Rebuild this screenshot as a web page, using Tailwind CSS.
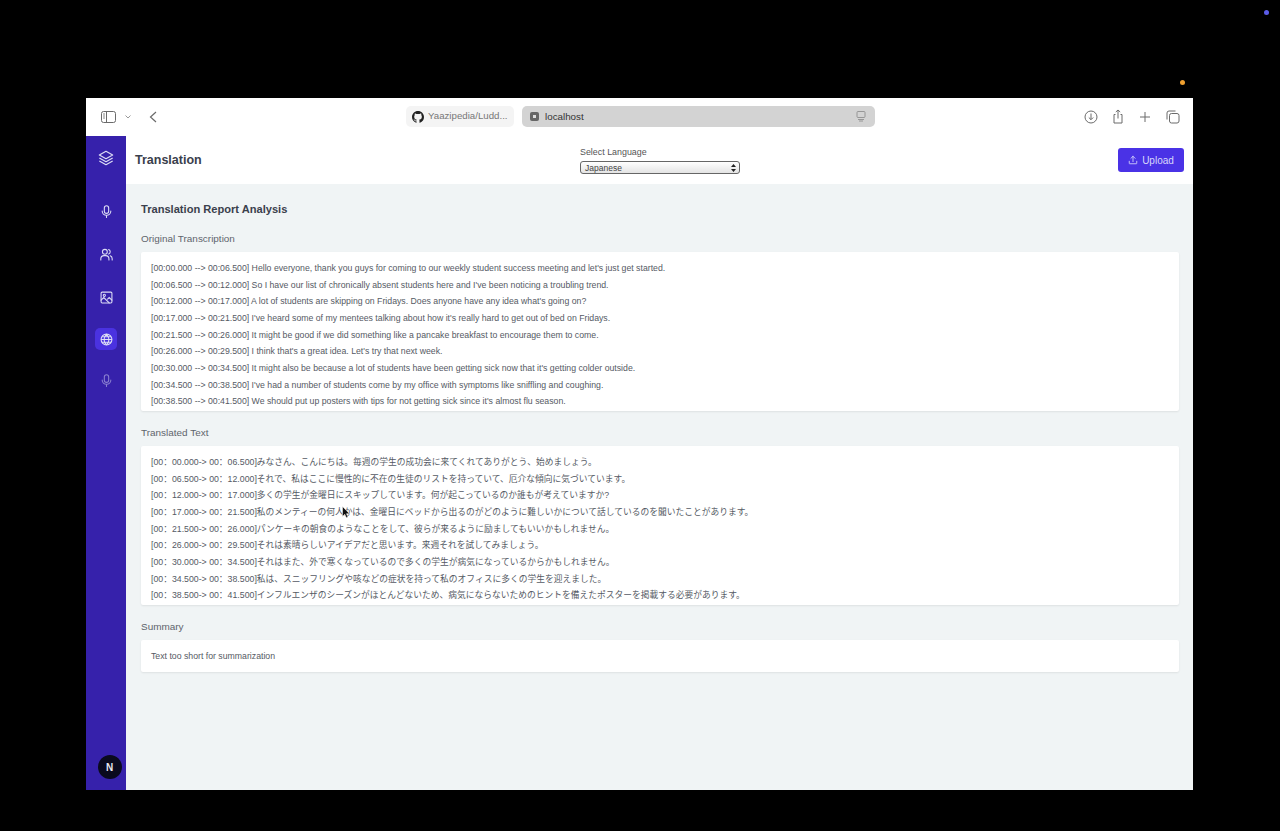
<!DOCTYPE html>
<html lang="en">

<head>
    <meta charset="UTF-8">
    <meta name="viewport" content="width=device-width, initial-scale=1.0">
    <title>Translation</title>
    <script src="https://cdn.jsdelivr.net/npm/@tailwindcss/browser@4"></script>
</head>

<body class="bg-black overflow-hidden font-['Liberation_Sans','Noto_Sans_CJK_JP',sans-serif]">

    <!-- recording dots -->
    <div class="absolute left-[1264px] top-[10px] w-[5px] h-[5px] rounded-full bg-[#5b5ce8]"></div>
    <div class="absolute left-[1180px] top-[80px] w-[5px] h-[5px] rounded-full bg-[#f0a030]"></div>

    <div class="h-[831px] pt-[98px] pl-[86px]">
        <div class="w-[1107px] h-[692px] flex flex-col bg-white overflow-hidden">

            <!-- safari toolbar -->
            <div class="h-[38px] shrink-0 flex items-center pb-[1px] text-[#6b6b6b]">
                <svg class="ml-[15px] w-[15px] h-[12px]" viewBox="0 0 15 12" fill="none" stroke="currentColor" stroke-width="1"><rect x=".5" y=".5" width="14" height="11" rx="2"/><path d="M5.5 .5v11"/><path d="M2 3h2M2 5h2M2 7h2" stroke-width=".8"/></svg>
                <svg class="ml-[9px] w-[6px] h-[4px]" viewBox="0 0 6 4" fill="none" stroke="#999" stroke-width="1"><path d="M.5 .5 3 3l2.5-2.5"/></svg>
                <svg class="ml-[18px] w-[8px] h-[12px]" viewBox="0 0 8 12" fill="none" stroke="currentColor" stroke-width="1.2"><path d="M7 1 1.5 6 7 11"/></svg>

                <div class="ml-[249px] w-[108px] h-[21px] rounded-[5px] bg-[#f4f4f4] flex items-center pl-[6px] gap-[4px]">
                    <svg class="w-[12px] h-[12px]" viewBox="0 0 16 16" fill="#222"><path d="M8 0C3.58 0 0 3.58 0 8c0 3.54 2.29 6.53 5.47 7.59.4.07.55-.17.55-.38 0-.19-.01-.82-.01-1.49-2.01.37-2.53-.49-2.69-.94-.09-.23-.48-.94-.82-1.13-.28-.15-.68-.52-.01-.53.63-.01 1.08.58 1.23.82.72 1.21 1.87.87 2.33.66.07-.52.28-.87.51-1.07-1.78-.2-3.64-.89-3.64-3.95 0-.87.31-1.59.82-2.15-.08-.2-.36-1.02.08-2.12 0 0 .67-.21 2.2.82.64-.18 1.32-.27 2-.27s1.36.09 2 .27c1.53-1.04 2.2-.82 2.2-.82.44 1.1.16 1.92.08 2.12.51.56.82 1.27.82 2.15 0 3.07-1.87 3.75-3.65 3.95.29.25.54.73.54 1.48 0 1.07-.01 1.93-.01 2.2 0 .21.15.46.55.38A8.01 8.01 0 0 0 16 8c0-4.42-3.58-8-8-8z"/></svg>
                    <span class="text-[9.700px] text-[#777]">Yaazipedia/Ludd...</span>
                </div>

                <div class="ml-[8px] w-[353px] h-[21px] rounded-[5px] bg-[#d3d3d3] flex items-center pl-[8px] pr-[9px]">
                    <span class="w-[9px] h-[9px] rounded-[2px] bg-[#666] flex items-center justify-center"><span class="w-[3px] h-[3px] bg-[#ddd]"></span></span>
                    <span class="ml-[6px] pt-[1px] text-[9.800px] text-[#333]">localhost</span>
                    <svg class="ml-auto w-[10px] h-[11px]" viewBox="0 0 10 11" fill="none" stroke="#888" stroke-width=".8"><rect x="1" y=".5" width="8" height="6" rx="1"/><path d="M2 8.500h6M3 10h4"/></svg>
                </div>

                <div class="ml-auto mr-[13px] flex items-center gap-[13px]">
                    <svg class="w-[14px] h-[14px]" viewBox="0 0 14 14" fill="none" stroke="currentColor" stroke-width="1"><circle cx="7" cy="7" r="6"/><path d="M7 3.500v6M4.800 7.500 7 9.700l2.200-2.200"/></svg>
                    <svg class="w-[14px] h-[15px]" viewBox="0 0 14 15" fill="none" stroke="currentColor" stroke-width="1"><path d="M4.500 5.500H3v8.500h8V5.500H9.500M7 9.500V1M4.800 3 7 1l2.200 2"/></svg>
                    <svg class="w-[14px] h-[14px]" viewBox="0 0 14 14" fill="none" stroke="currentColor" stroke-width="1"><path d="M7 2v10M2 7h10"/></svg>
                    <svg class="ml-[1px] w-[14px] h-[14px]" viewBox="0 0 14 14" fill="none" stroke="currentColor" stroke-width="1"><rect x="3.500" y="3.500" width="9.500" height="9.500" rx="2"/><path d="M1 9.500V3a2 2 0 0 1 2-2h6.500"/></svg>
                </div>
            </div>

            <div class="flex-1 flex min-h-0">

                <!-- sidebar -->
                <aside class="w-[40px] shrink-0 bg-[#3621ab] flex flex-col items-center text-[#dcdcf5]">
                    <svg class="mt-[14px] w-[16px] h-[16px]" viewBox="0 0 24 24" fill="none" stroke="currentColor" stroke-width="1.8" stroke-linejoin="round"><path d="M12 2 2 7.500 12 13l10-5.500z"/><path d="m2 12 10 5.500L22 12"/><path d="m2 16.500 10 5.500 10-5.500"/></svg>

                    <svg class="mt-[39px] w-[13px] h-[13px]" viewBox="0 0 24 24" fill="none" stroke="currentColor" stroke-width="2" stroke-linecap="round"><rect x="8" y="1.500" width="8" height="14" rx="4"/><path d="M4 11a8 8 0 0 0 16 0M12 19v4"/></svg>

                    <svg class="mt-[30px] w-[13px] h-[13px]" viewBox="0 0 24 24" fill="none" stroke="currentColor" stroke-width="2" stroke-linecap="round"><circle cx="9" cy="7" r="4.500"/><path d="M1.500 22v-2a6 6 0 0 1 6-6h3a6 6 0 0 1 6 6v2M16 2.800a4.500 4.500 0 0 1 0 8.400M19 14.300a6 6 0 0 1 3.500 5.700v2"/></svg>

                    <svg class="mt-[30px] w-[13px] h-[13px]" viewBox="0 0 24 24" fill="none" stroke="currentColor" stroke-width="2" stroke-linecap="round"><rect x="2" y="2" width="20" height="20" rx="2"/><circle cx="8" cy="8" r="2"/><path d="m2 17 5-5 10 10M14 15l3-3 5 5"/></svg>

                    <div class="mt-[24px] w-[22px] h-[22px] rounded-[5px] bg-[#4a32e0] flex items-center justify-center">
                        <svg class="w-[13px] h-[13px]" viewBox="0 0 24 24" fill="none" stroke="currentColor" stroke-width="2"><circle cx="12" cy="12" r="10"/><path d="M2 12h20M3.500 7h17M3.500 17h17M12 2c-6 6-6 14 0 20M12 2c6 6 6 14 0 20"/></svg>
                    </div>

                    <svg class="mt-[24px] w-[13px] h-[13px] opacity-50" viewBox="0 0 24 24" fill="none" stroke="currentColor" stroke-width="2" stroke-linecap="round"><rect x="8" y="1.500" width="8" height="14" rx="4"/><path d="M4 11a8 8 0 0 0 16 0M12 19v4"/></svg>

                    <div class="mt-auto mb-[11px] ml-[7px] w-[24px] h-[24px] rounded-full bg-[#0a0a1e] flex items-center justify-center text-[10px] font-bold text-[#e8e8f0]">N</div>
                </aside>

                <div class="flex-1 flex flex-col min-w-0">

                    <!-- header -->
                    <header class="h-[48px] shrink-0 bg-white flex items-center relative pl-[9px] pr-[9px]">
                        <h1 class="pt-[1px] text-[12.500px] font-bold text-[#3a404c]">Translation</h1>
                        <div class="absolute left-[454px] top-[11px]">
                            <p class="text-[8.900px] leading-[11px] text-[#555]">Select Language</p>
                            <div class="mt-[3px] w-[160px] h-[13px] rounded-[3px] border border-[#666] bg-gradient-to-b from-white to-[#e4e4e4] flex items-center pl-[4px] pr-[3px]">
                                <span class="pt-[1px] text-[8.500px] text-[#444]">Japanese</span>
                                <svg class="ml-auto w-[5px] h-[8px]" viewBox="0 0 5 8" fill="#222"><path d="M2.500 0 5 3H0zM2.500 8 0 5h5z"/></svg>
                            </div>
                        </div>
                        <button class="ml-auto w-[66px] h-[24px] rounded-[3px] bg-[#4a32e6] text-[#d8d8fb] text-[10px] flex items-center justify-center gap-[4px]">
                            <svg class="w-[10px] h-[10px]" viewBox="0 0 24 24" fill="none" stroke="currentColor" stroke-width="2" stroke-linecap="round"><path d="M12 16V3M7 8l5-5 5 5M3 15v5a1 1 0 0 0 1 1h16a1 1 0 0 0 1-1v-5"/></svg>
                            Upload
                        </button>
                    </header>

                    <!-- report -->
                    <main class="flex-1 bg-[#f0f4f5] pl-[15px] pr-[14px] pt-[19px]">
                        <h2 class="text-[11.100px] leading-[13px] font-bold text-[#3a404c]">Translation Report Analysis</h2>

                        <h3 class="mt-[17px] text-[9.950px] leading-[12px] text-[#5f646c]">Original Transcription</h3>
                        <div class="mt-[7px] h-[159px] bg-white rounded-[2px] shadow-[0_1px_2px_rgba(0,0,0,0.08)] pl-[10px] pt-[8px] text-[8.720px] leading-[16.650px] text-[#555a64] overflow-hidden">
                            <p>[00:00.000 --&gt; 00:06.500] Hello everyone, thank you guys for coming to our weekly student success meeting and let's just get started.</p>
                            <p>[00:06.500 --&gt; 00:12.000] So I have our list of chronically absent students here and I've been noticing a troubling trend.</p>
                            <p>[00:12.000 --&gt; 00:17.000] A lot of students are skipping on Fridays. Does anyone have any idea what's going on?</p>
                            <p>[00:17.000 --&gt; 00:21.500] I've heard some of my mentees talking about how it's really hard to get out of bed on Fridays.</p>
                            <p>[00:21.500 --&gt; 00:26.000] It might be good if we did something like a pancake breakfast to encourage them to come.</p>
                            <p>[00:26.000 --&gt; 00:29.500] I think that's a great idea. Let's try that next week.</p>
                            <p>[00:30.000 --&gt; 00:34.500] It might also be because a lot of students have been getting sick now that it's getting colder outside.</p>
                            <p>[00:34.500 --&gt; 00:38.500] I've had a number of students come by my office with symptoms like sniffling and coughing.</p>
                            <p>[00:38.500 --&gt; 00:41.500] We should put up posters with tips for not getting sick since it's almost flu season.</p>
                        </div>

                        <h3 class="mt-[16px] text-[9.950px] leading-[12px] text-[#5f646c]">Translated Text</h3>
                        <div class="mt-[7px] h-[159px] bg-white rounded-[2px] shadow-[0_1px_2px_rgba(0,0,0,0.08)] pl-[10px] pt-[8px] font-['Liberation_Sans','Noto_Sans_CJK_SC',sans-serif] text-[8.750px] leading-[16.650px] text-[#555a64] overflow-hidden">
                            <p>[00：00.000-&gt; 00：06.500]みなさん、こんにちは。毎週の学生の成功会に来てくれてありがとう、始めましょう。</p>
                            <p>[00：06.500-&gt; 00：12.000]それで、私はここに慢性的に不在の生徒のリストを持っていて、厄介な傾向に気づいています。</p>
                            <p>[00：12.000-&gt; 00：17.000]多くの学生が金曜日にスキップしています。何が起こっているのか誰もが考えていますか?</p>
                            <p>[00：17.000-&gt; 00：21.500]私のメンティーの何人かは、金曜日にベッドから出るのがどのように難しいかについて話しているのを聞いたことがあります。</p>
                            <p>[00：21.500-&gt; 00：26.000]パンケーキの朝食のようなことをして、彼らが来るように励ましてもいいかもしれません。</p>
                            <p>[00：26.000-&gt; 00：29.500]それは素晴らしいアイデアだと思います。来週それを試してみましょう。</p>
                            <p>[00：30.000-&gt; 00：34.500]それはまた、外で寒くなっているので多くの学生が病気になっているからかもしれません。</p>
                            <p>[00：34.500-&gt; 00：38.500]私は、スニッフリングや咳などの症状を持って私のオフィスに多くの学生を迎えました。</p>
                            <p>[00：38.500-&gt; 00：41.500]インフルエンザのシーズンがほとんどないため、病気にならないためのヒントを備えたポスターを掲載する必要があります。</p>
                        </div>

                        <h3 class="mt-[16px] text-[9.950px] leading-[12px] text-[#5f646c]">Summary</h3>
                        <div class="mt-[7px] h-[32px] bg-white rounded-[2px] shadow-[0_1px_2px_rgba(0,0,0,0.08)] pl-[10px] pt-[8px] text-[8.720px] leading-[16.650px] text-[#555a64]">
                            <p>Text too short for summarization</p>
                        </div>
                    </main>
                </div>
            </div>
        </div>
    </div>

    <!-- mouse pointer -->
    <svg class="absolute left-[342px] top-[506px] w-[8px] h-[13px]" viewBox="0 0 8 13" fill="#111" stroke="#fff" stroke-width=".5"><path d="M.5.500v10l2.300-2.200 1.500 3.500 1.700-.7-1.500-3.400h3z"/></svg>

</body>

</html>
